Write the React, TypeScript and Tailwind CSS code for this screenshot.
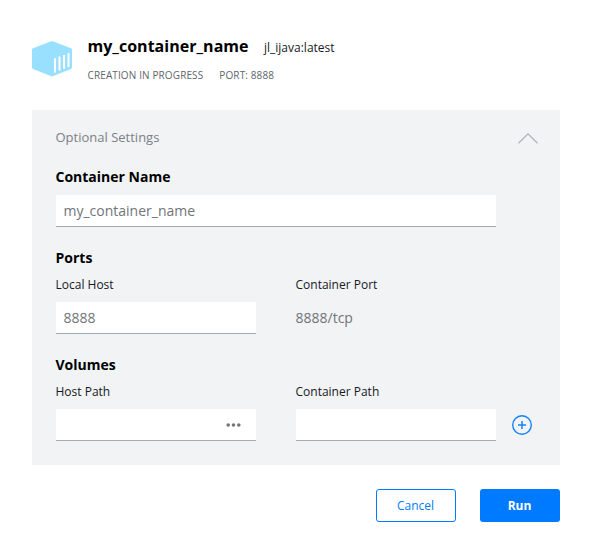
import type { ReactNode } from "react";

function Heading({ children }: { children: ReactNode }) {
  return <h2 className="-ml-px h-5 pl-[0.5px] text-[14px] leading-5 font-bold whitespace-nowrap text-black">{children}</h2>;
}

function Label({ children }: { children: ReactNode }) {
  return <div className="-ml-[0.5px] h-5 text-[12px] leading-5 whitespace-nowrap text-[#17191e]">{children}</div>;
}

function Field({ value, className, children }: { value?: string; className: string; children?: ReactNode }) {
  return (
    <div className={`flex h-8 items-center justify-between border-b bg-white pl-[7.5px] text-[14px] leading-5 text-[#717579] ${className}`}>
      <span>{value}</span>
      {children}
    </div>
  );
}

export default function App() {
  return (
    <div className="h-[552px] w-[592px] bg-white px-8 pt-[34px] font-['Open_Sans',sans-serif]">
      <header className="flex h-[76px]">
        <svg className="mt-[7px] h-9 w-10 shrink-0" viewBox="0 0 40 36">
          <path d="M20 0 39 7.2Q40 7.6 40 8.6v17.9q0 1-1 1.4L20 35.6 1 27.9Q0 27.5 0 26.5V8.6q0-1 1-1.4Z" fill="#99e0ff" />
          <path d="M23 17.2v14.2M27.5 15.6v14M32 13.9v13.8M36.5 12.2v13.8" stroke="#fff" strokeWidth="2" />
        </svg>
        <div className="ml-[15.5px]">
          <div className="flex h-6 items-baseline whitespace-nowrap">
            <h1 className="w-[160.5px] text-[16px] leading-6 font-bold tracking-[0.02px] text-black">my_container_name</h1>
            <span className="ml-4 text-[12px] leading-5 text-[#17191e]">jl_ijava:latest</span>
          </div>
          <div className="mt-[9px] flex h-4 gap-4 text-[10px] leading-4 font-medium tracking-[0.12px] whitespace-nowrap text-[#60666c]">
            <span>CREATION IN PROGRESS</span>
            <span>PORT: 8888</span>
          </div>
        </div>
      </header>

      <main className="h-[355px] bg-[#f1f3f5] px-6 pt-[17px]">
        <div className="-mr-0.5 flex h-5 items-center justify-between">
          <span className="-ml-[0.5px] text-[13px] leading-5 text-[#7c8085]">Optional Settings</span>
          <svg className="mt-[2px] h-[11px] w-5" viewBox="0 0 20 11" fill="none" stroke="#adb5ba" strokeWidth="1.3">
            <path d="M.5 10.2 10 .9l9.5 9.3" />
          </svg>
        </div>

        <section className="mt-5">
          <Heading>Container Name</Heading>
          <Field value="my_container_name" className="mt-2 w-[440px] border-[#9eacb7]" />
        </section>

        <section className="mt-[21px]">
          <Heading>Ports</Heading>
          <div className="mt-[7px] flex gap-10">
            <div className="w-[200px]">
              <Label>Local Host</Label>
              <Field value="8888" className="mt-[7px] border-[#9eacb7]" />
            </div>
            <div className="w-[200px]">
              <Label>Container Port</Label>
              <div className="mt-[7px] -ml-[0.5px] flex h-8 items-center text-[14px] leading-5 text-[#717579]">8888/tcp</div>
            </div>
          </div>
        </section>

        <section className="mt-[21px]">
          <Heading>Volumes</Heading>
          <div className="mt-[7px] flex">
            <div className="w-[200px]">
              <Label>Host Path</Label>
              <Field className="mt-[7px] border-[#a9abad]">
                <svg className="mr-[15px] h-1 w-[15px]" viewBox="0 0 15 4" fill="#717579">
                  <circle cx="2.2" cy="2" r="1.8" />
                  <circle cx="7.5" cy="2" r="1.8" />
                  <circle cx="12.8" cy="2" r="1.8" />
                </svg>
              </Field>
            </div>
            <div className="ml-10 w-[200px]">
              <Label>Container Path</Label>
              <Field className="mt-[7px] border-[#a9abad]" />
            </div>
            <svg className="mt-[33px] ml-4 h-5 w-5" viewBox="0 0 20 20" fill="none" stroke="#1683f8">
              <circle cx="10" cy="10" r="9.3" strokeWidth="1.4" />
              <path d="M6 10h8M10 6v8" strokeWidth="1.5" />
            </svg>
          </div>
        </section>
      </main>

      <footer className="mt-6 flex justify-end gap-6 text-[12px] leading-5">
        <button className="h-[33px] w-20 rounded-[3px] border border-[#007bff] bg-white pr-px text-[#007bff]">Cancel</button>
        <button className="h-[33px] w-20 rounded-[3px] bg-[#007bff] pr-px font-bold text-white">Run</button>
      </footer>
    </div>
  );
}
